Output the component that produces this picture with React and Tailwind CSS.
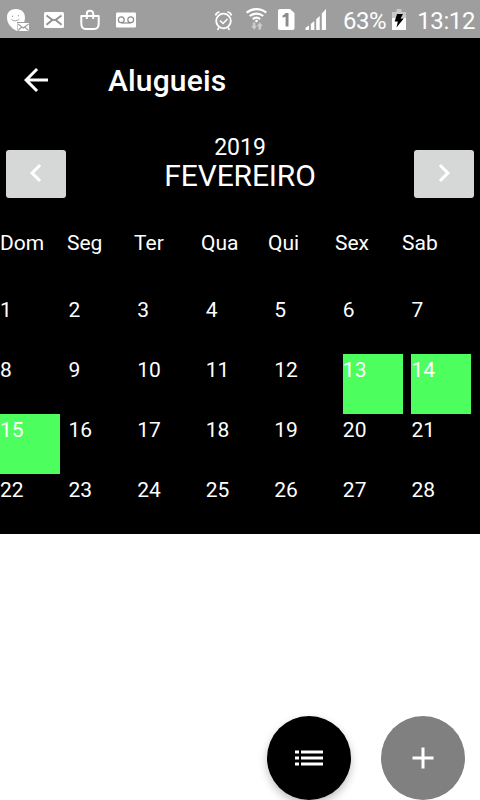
const WEEKDAYS = ["Dom", "Seg", "Ter", "Qua", "Qui", "Sex", "Sab"];
const DAYS = Array.from({ length: 28 }, (_, i) => i + 1);
const RENTED = [13, 14, 15];

function StatusBar() {
  return (
    <div className="flex h-[38px] shrink-0 items-center bg-[#9e9e9e] text-2xl text-white">
      <svg width="144" height="38" viewBox="0 0 144 38" fill="none">
        <path d="M16 9c5.500 0 9 3.500 9 8.500 0 1.500-.3 3-.8 4.500H17v9c-6.500-3-10-8-10-13.500S10.500 9 16 9z" fill="#fff" />
        <path d="M11.500 19.500c2.300 1.800 5.500 1.800 7.800-.3" stroke="#9e9e9e" strokeWidth="1" />
        <circle cx="12.500" cy="16.300" r=".7" fill="#9e9e9e" />
        <circle cx="18.500" cy="15.800" r=".7" fill="#9e9e9e" />
        <path d="M17.500 23h11.500v8H17.500z" fill="#fff" />
        <path d="M18 24l5.300 4 5.300-4M18 30.500l3.800-3.500M28.500 30.500l-3.800-3.500" stroke="#9e9e9e" strokeWidth="1.100" />
        <rect x="44" y="12" width="20" height="16" rx="1.500" fill="#fff" />
        <path d="M46.500 15.500l5 3.700c1.600 1.200 3.400 1.200 5 0l5-3.700M46.500 24.700l5.500-4.500M61.500 24.700l-5.500-4.500" stroke="#8f8f8f" strokeWidth="1.800" />
        <path d="M81.300 16h17.400v7.500c0 3.500-1.700 5.500-4.500 5.500h-8.400c-2.800 0-4.500-2-4.500-5.500z" stroke="#fff" strokeWidth="2" strokeLinejoin="round" />
        <path d="M86.800 19v-5c0-4.200 6.400-4.200 6.400 0v5" stroke="#fff" strokeWidth="2" />
        <rect x="116" y="12.500" width="20" height="15" rx="1.200" fill="#fff" />
        <circle cx="121.300" cy="19.700" r="2.900" stroke="#8c8c8c" strokeWidth="1.200" />
        <circle cx="130.700" cy="19.700" r="2.900" stroke="#8c8c8c" strokeWidth="1.200" />
        <path d="M121.300 23h9.400" stroke="#8c8c8c" strokeWidth="1.200" />
      </svg>
      <svg className="ml-auto" width="126" height="38" viewBox="207 0 126 38" fill="none">
        <circle cx="223.500" cy="21" r="7.300" stroke="#fff" strokeWidth="1.800" />
        <path d="M220 20.500l3 3 4.500-4.500M219 27.500l-1.500 2.500M228 27.500l1.500 2.500" stroke="#fff" strokeWidth="1.500" />
        <path d="M215.500 15.500c.5-2 2-3.300 4-3.800M231.500 15.500c-.5-2-2-3.300-4-3.800" stroke="#fff" strokeWidth="1.700" />
        <path d="M246.700 12.700c5.500-4.700 14-4.700 19.500 0M249.700 16c4-3.300 9.600-3.300 13.500 0M252.800 19.200c2.200-1.800 5.200-1.800 7.400 0" stroke="#fff" strokeWidth="2.200" />
        <circle cx="256.500" cy="21" r="1.300" fill="#fff" />
        <path d="M252.800 22.500v3.500h-1.600l2.900 3.700 2.900-3.700h-1.600v-3.500zM258.500 29.500V26h-1.600l2.900-3.700 2.900 3.700h-1.600v3.500z" fill="#cdcdcd" />
        <path d="M280 9h10l4.500 4v15c0 1.300-.7 2-2 2H280c-1.300 0-2-.7-2-2V11c0-1.300.7-2 2-2z" fill="#fff" />
        <path d="M285.600 13h2.900v13.500h-2.900V16.800l-3 1v-2.300c1.300-.5 2.300-1.300 3-2.500z" fill="#8c8c8c" />
        <path d="M305.500 30v-2.200l3.500-2.300V30zM310.800 30v-6l3.500-3v9zM316.200 30V19.200l3.500-3.200v14zM321.800 30V13.500l4.200-4.500v21z" fill="#fff" />
      </svg>
      <div className="flex w-[147px] items-center pl-[10px] pt-[3px] leading-9">
        <span className="w-[44px] tracking-[-0.5px]">63%</span>
        <svg className="-mt-[2px] ml-[5px] shrink-0" width="14" height="22" viewBox="0 0 14 22">
          <path d="M4.500 0h5v3H14v6H0V3h4.500z" fill="#c9c9c9" />
          <path d="M0 9h14v12H0z" fill="#fff" />
          <path d="M5 5h6L8.600 9.500h3.200L4.500 18.500l1.300-6H2.700z" fill="#000" />
        </svg>
        <span className="ml-auto mr-[5px] tracking-[-0.4px]">13:12</span>
      </div>
    </div>
  );
}

function Icon({ path }) {
  return (
    <svg width="36" height="36" viewBox="0 0 24 24" fill="currentColor">
      <path d={path} />
    </svg>
  );
}

function MonthButton({ label, path }) {
  return (
    <button aria-label={label} className="mt-7 flex h-12 w-[60px] items-center justify-center rounded-[3px] bg-[#d6d7d7] pb-0.5">
      <Icon path={path} />
    </button>
  );
}

export default function App() {
  return (
    <div className="flex h-[800px] w-[480px] flex-col overflow-hidden bg-white font-['Roboto',sans-serif] text-white">
      <StatusBar />
      <header className="flex h-[84px] shrink-0 items-center bg-black pl-[18px]">
        <button aria-label="Voltar">
          <Icon path="M20 11H7.830l5.590-5.590L12 4l-8 8 8 8 1.410-1.410L7.830 13H20v-2z" />
        </button>
        <h1 className="ml-[54px] pt-0.5 text-[30px] font-medium leading-9 tracking-[0.15px]">Alugueis</h1>
      </header>
      <main className="shrink-0 bg-black text-[21px] leading-8">
        <div className="flex h-[104px] justify-between px-1.5">
          <MonthButton label="Mês anterior" path="M15.410 7.410L14 6l-6 6 6 6 1.410-1.410L10.830 12z" />
          <div className="pt-[13px] text-center">
            <div className="text-[23px] leading-[26px]">2019</div>
            <div className="text-[30px] leading-[30px] tracking-[-0.15px]">FEVEREIRO</div>
          </div>
          <MonthButton label="Próximo mês" path="M10 6L8.590 7.410 13.170 12l-4.580 4.590L10 18l6-6z" />
        </div>
        <div className="flex h-[68px] pt-[1px]">
          {WEEKDAYS.map((name) => (
            <div key={name} className="w-[67px]">{name}</div>
          ))}
        </div>
        <div className="grid grid-cols-7">
          {DAYS.map((day) => (
            <div key={day} className={RENTED.includes(day) ? "h-[60px] w-[60px] bg-[#4cff5f]" : "h-[60px] w-[60px]"}>
              {day}
            </div>
          ))}
        </div>
      </main>
      <div className="mt-auto flex justify-end gap-[30px] pr-[15px]">
        <button aria-label="Lista" className="flex size-[84px] items-center justify-center rounded-full bg-black shadow-[0_4px_8px_rgba(0,0,0,0.25)]">
          <svg width="28" height="16" viewBox="0 0 28 16" fill="currentColor">
            <path d="M0 .5h4v3H0zM0 6.500h4v3H0zM0 12.500h4v3H0zM6 .5h22v3H6zM6 6.500h22v3H6zM6 12.500h22v3H6z" />
          </svg>
        </button>
        <button aria-label="Adicionar" className="flex size-[84px] items-center justify-center rounded-full bg-[#808080]">
          <Icon path="M19 13h-6v6h-2v-6H5v-2h6V5h2v6h6v2z" />
        </button>
      </div>
    </div>
  );
}
